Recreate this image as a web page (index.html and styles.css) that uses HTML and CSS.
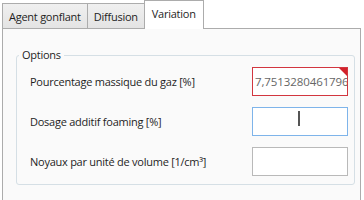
FILE: index.html
```html
<!DOCTYPE html>
<html lang="fr">
  <head>
    <meta charset="UTF-8" />
    <meta name="viewport" content="width=device-width, initial-scale=1.0" />
    <title>Variation</title>
    <link rel="stylesheet" href="styles.css">
  </head>
  <body>
    <div class="tab-strip">
      <div class="tab">Agent gonflant</div>
      <div class="tab">Diffusion</div>
      <div class="tab selected">Variation</div>
    </div>

    <div class="tab-panel">
      <fieldset class="group">
        <legend>Options</legend>

        <div class="row">
          <span class="label">Pourcentage massique du gaz [%]</span>
          <div class="field error">
            <span class="value">7,7513280461796466</span>
          </div>
        </div>

        <div class="row">
          <span class="label">Dosage additif foaming [%]</span>
          <div class="field focused">
            <span class="caret"></span>
          </div>
        </div>

        <div class="row">
          <span class="label">Noyaux par unité de volume [1/cm³]</span>
          <div class="field"></div>
        </div>
      </fieldset>
    </div>
  </body>
</html>
```

FILE: styles.css
```css
/* Base */
body {
  font-family: "Open Sans", "Noto Sans", Arial, sans-serif;
  font-size: 11px;
  letter-spacing: -0.25px;
  color: #1e1e1e;
  margin: 0;
  padding: 0;
  background-color: #fff;
  overflow: hidden;
}

/* Tabs */
.tab-strip {
  display: flex;
  align-items: flex-end;
  height: 28px;
  padding-left: 2px;
}

.tab {
  height: 24px;
  line-height: 25px;
  padding: 0 6px;
  margin-right: -1px;
  border: 1px solid #acacac;
  border-bottom: none;
  background-image: linear-gradient(to bottom, #f0f0f0, #e4e4e4);
}

.tab.selected {
  position: relative;
  z-index: 1;
  height: 28px;
  line-height: 26px;
  margin-bottom: -1px;
  padding: 0 7px;
  background: #fff;
}

/* Panel */
.tab-panel {
  width: 359px;
  height: 172px;
  margin-left: 2px;
  padding: 18px 5px 0 13px;
  box-sizing: border-box;
  border: 1px solid #acacac;
  border-bottom: none;
  background-color: #fafafa;
}

/* Group box */
.group {
  margin: 0;
  padding: 4px 6px 8px 13px;
  border: 1px solid #d5dfe5;
  border-radius: 3px;
}

.group legend {
  padding: 0 3px;
  margin-left: -11px;
  line-height: 16px;
}

/* Rows */
.row {
  display: flex;
  align-items: center;
  justify-content: space-between;
  margin-bottom: 11px;
}

.row:last-child {
  margin-bottom: 0;
}

.field {
  position: relative;
  width: 96px;
  height: 29px;
  box-sizing: border-box;
  border: 1px solid #b9b9b9;
  background: #fff;
  overflow: hidden;
  display: flex;
  align-items: center;
}

.field.error {
  border-color: #d2363f;
}

/* Red corner marker */
.field.error::after {
  content: "";
  position: absolute;
  top: 0;
  right: 0;
  border-top: 8px solid #d2222b;
  border-left: 8px solid transparent;
}

.field.focused {
  border-color: #7eb4ea;
}

.value {
  padding-left: 2px;
  font-size: 11.5px;
  letter-spacing: -0.1px;
  color: #666;
  white-space: nowrap;
}

.caret {
  width: 2px;
  height: 15px;
  margin-left: 45px;
  margin-top: -6px;
  background: #555;
}
```
